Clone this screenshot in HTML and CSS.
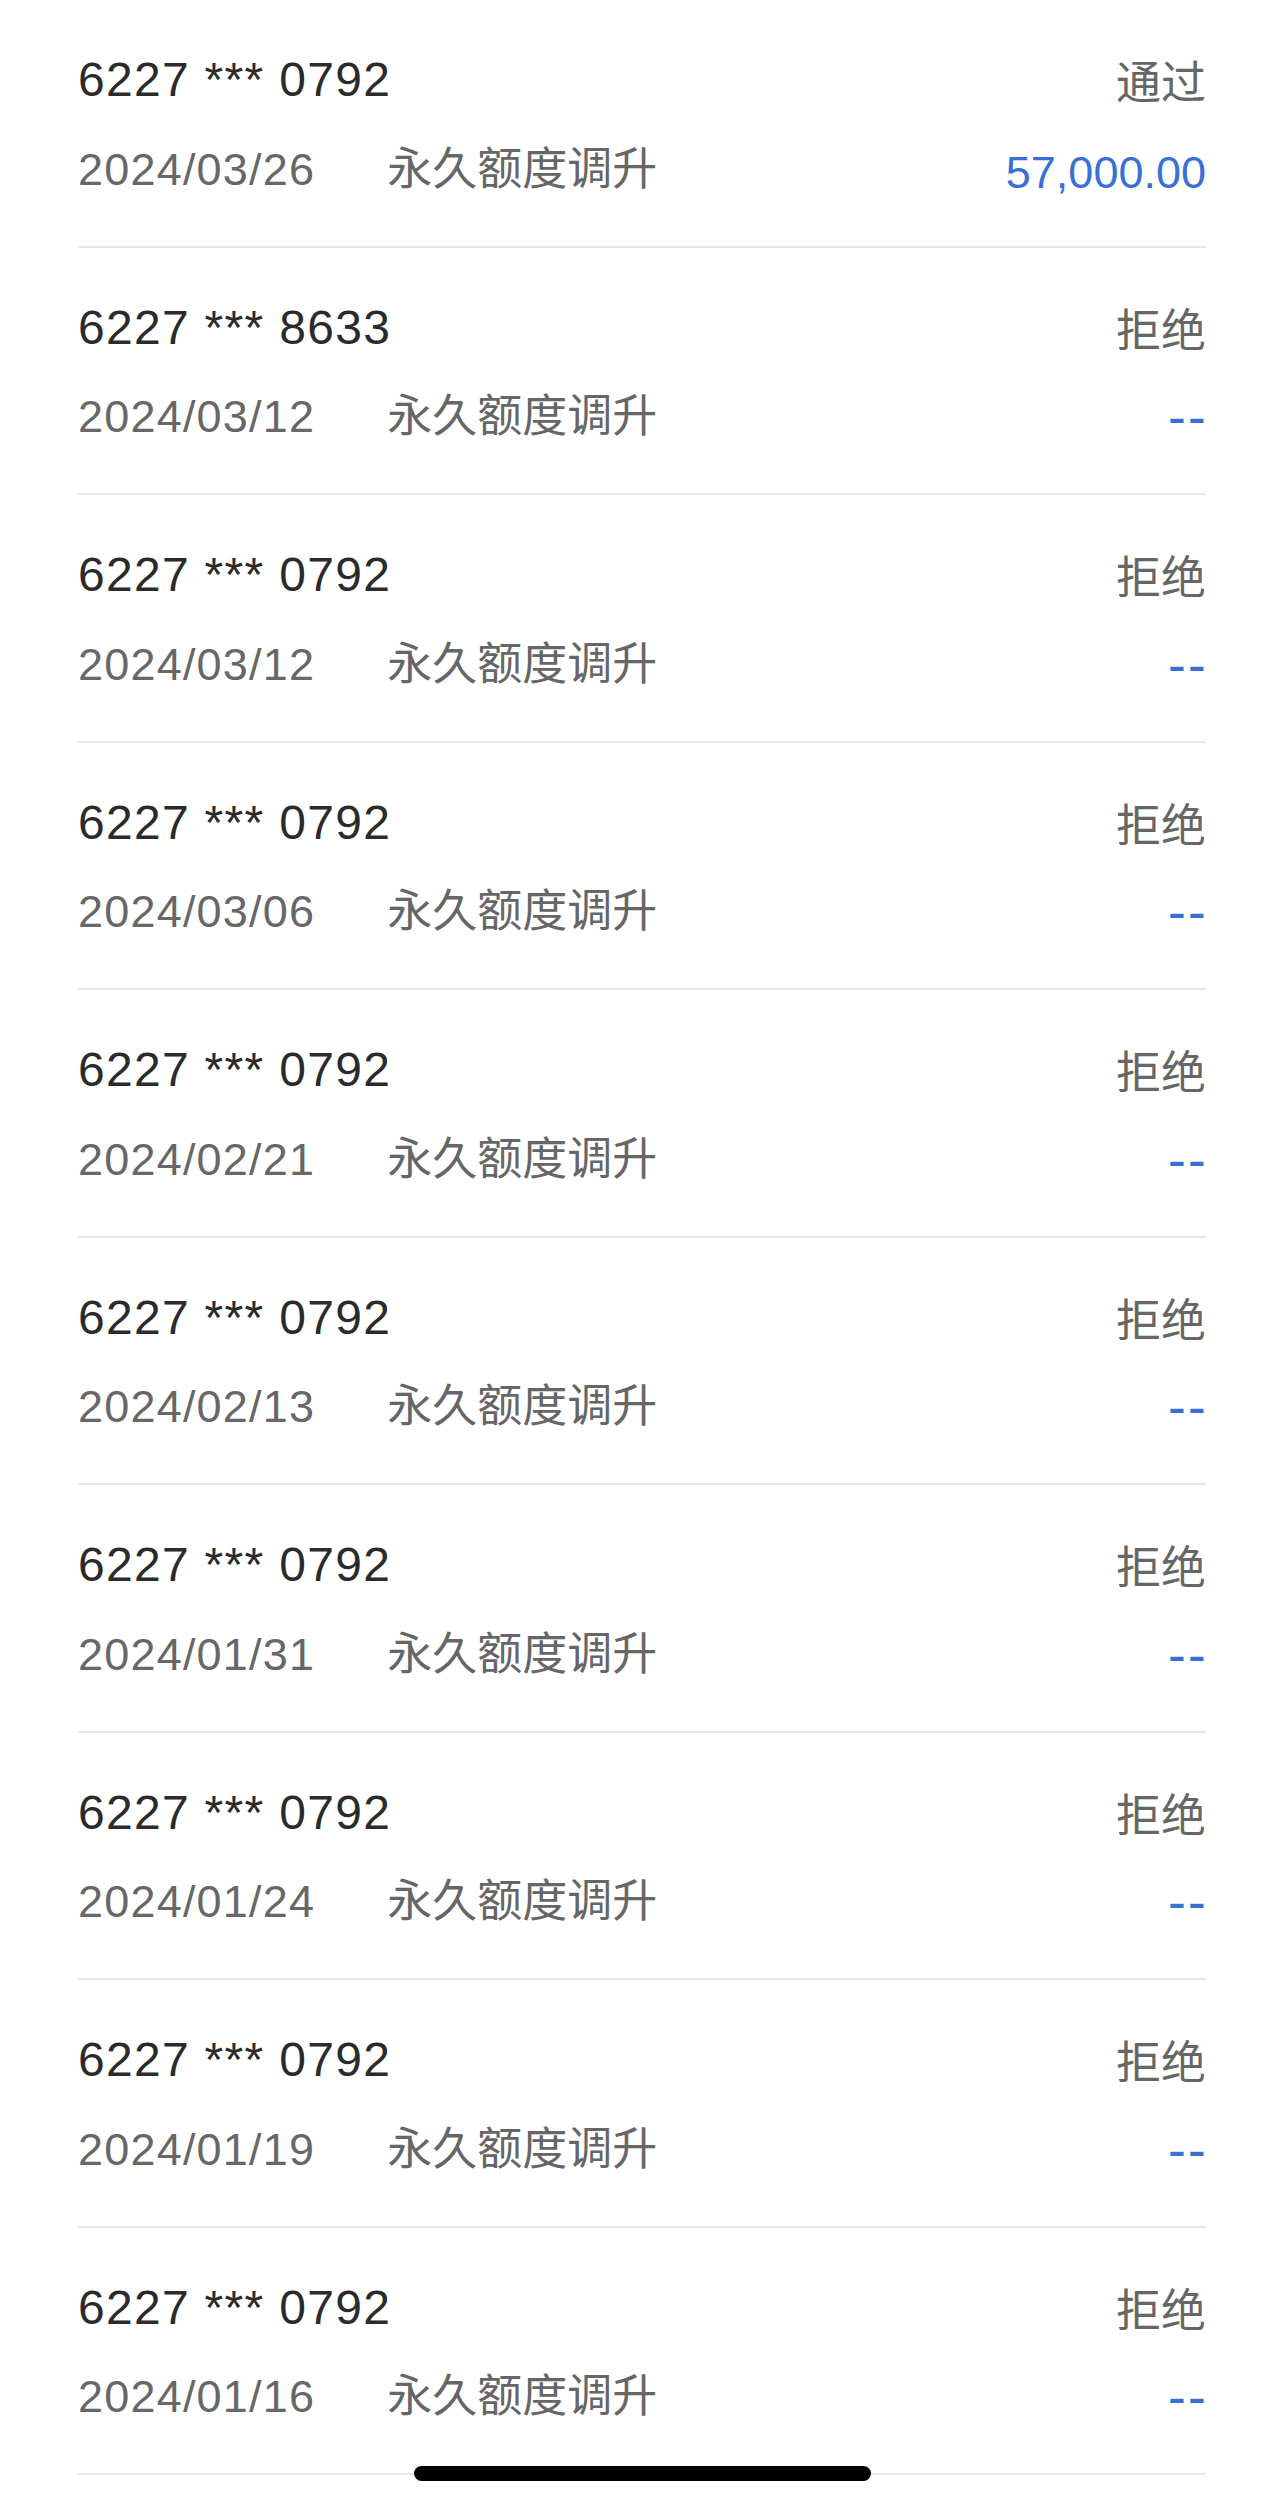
FILE: index.html
```html
<!DOCTYPE html>
<html lang="zh-CN">
<head>
    <meta charset="UTF-8">
    <meta name="viewport" content="width=device-width, initial-scale=1.0">
    <title>额度调整记录</title>
    <link rel="stylesheet" href="styles.css">
</head>
<body>
    <div class="record-list">
        <div class="record">
            <div class="line">
                <span class="card">6227 *** 0792</span>
                <span class="status">通过</span>
            </div>
            <div class="line">
                <span class="meta"><span class="date">2024/03/26</span><span class="type">永久额度调升</span></span>
                <span class="amount">57,000.00</span>
            </div>
        </div>
        <div class="record">
            <div class="line">
                <span class="card">6227 *** 8633</span>
                <span class="status">拒绝</span>
            </div>
            <div class="line">
                <span class="meta"><span class="date">2024/03/12</span><span class="type">永久额度调升</span></span>
                <span class="amount empty">--</span>
            </div>
        </div>
        <div class="record">
            <div class="line">
                <span class="card">6227 *** 0792</span>
                <span class="status">拒绝</span>
            </div>
            <div class="line">
                <span class="meta"><span class="date">2024/03/12</span><span class="type">永久额度调升</span></span>
                <span class="amount empty">--</span>
            </div>
        </div>
        <div class="record">
            <div class="line">
                <span class="card">6227 *** 0792</span>
                <span class="status">拒绝</span>
            </div>
            <div class="line">
                <span class="meta"><span class="date">2024/03/06</span><span class="type">永久额度调升</span></span>
                <span class="amount empty">--</span>
            </div>
        </div>
        <div class="record">
            <div class="line">
                <span class="card">6227 *** 0792</span>
                <span class="status">拒绝</span>
            </div>
            <div class="line">
                <span class="meta"><span class="date">2024/02/21</span><span class="type">永久额度调升</span></span>
                <span class="amount empty">--</span>
            </div>
        </div>
        <div class="record">
            <div class="line">
                <span class="card">6227 *** 0792</span>
                <span class="status">拒绝</span>
            </div>
            <div class="line">
                <span class="meta"><span class="date">2024/02/13</span><span class="type">永久额度调升</span></span>
                <span class="amount empty">--</span>
            </div>
        </div>
        <div class="record">
            <div class="line">
                <span class="card">6227 *** 0792</span>
                <span class="status">拒绝</span>
            </div>
            <div class="line">
                <span class="meta"><span class="date">2024/01/31</span><span class="type">永久额度调升</span></span>
                <span class="amount empty">--</span>
            </div>
        </div>
        <div class="record">
            <div class="line">
                <span class="card">6227 *** 0792</span>
                <span class="status">拒绝</span>
            </div>
            <div class="line">
                <span class="meta"><span class="date">2024/01/24</span><span class="type">永久额度调升</span></span>
                <span class="amount empty">--</span>
            </div>
        </div>
        <div class="record">
            <div class="line">
                <span class="card">6227 *** 0792</span>
                <span class="status">拒绝</span>
            </div>
            <div class="line">
                <span class="meta"><span class="date">2024/01/19</span><span class="type">永久额度调升</span></span>
                <span class="amount empty">--</span>
            </div>
        </div>
        <div class="record">
            <div class="line">
                <span class="card">6227 *** 0792</span>
                <span class="status">拒绝</span>
            </div>
            <div class="line">
                <span class="meta"><span class="date">2024/01/16</span><span class="type">永久额度调升</span></span>
                <span class="amount empty">--</span>
            </div>
        </div>
    </div>

    <div class="home-indicator"></div>
</body>
</html>
```

FILE: styles.css
```css
body {
    margin: 0;
    background: #fff;
    font-family: "Liberation Sans", "Noto Sans CJK SC", sans-serif;
}
.record-list {
    padding: 0 78px;
}
.record {
    padding: 50px 0 43px;
    border-bottom: 2px solid #e6e6e6;
}
.line {
    display: flex;
    justify-content: space-between;
    align-items: center;
    height: 60px;
    line-height: 60px;
}
.line + .line {
    margin-top: 32.5px;
}
.card {
    font-size: 48px;
    letter-spacing: 1.3px;
    color: #2b2b2b;
}
.status {
    font-family: "Noto Sans CJK SC", sans-serif;
    font-size: 45px;
    color: #666;
}
.date {
    font-size: 45px;
    letter-spacing: 1.2px;
    color: #676767;
}
.type {
    font-family: "Noto Sans CJK SC", sans-serif;
    font-size: 45px;
    color: #666;
    margin-left: 72px;
}
.amount {
    font-size: 45px;
    color: #3a6fd6;
}
.amount.empty {
    font-size: 54px;
    letter-spacing: 2px;
    margin-right: -2px;
    margin-top: -8px;
}
.home-indicator {
    position: fixed;
    left: 414px;
    bottom: 24px;
    width: 457px;
    height: 15px;
    border-radius: 8px;
    background: #000;
}
```
